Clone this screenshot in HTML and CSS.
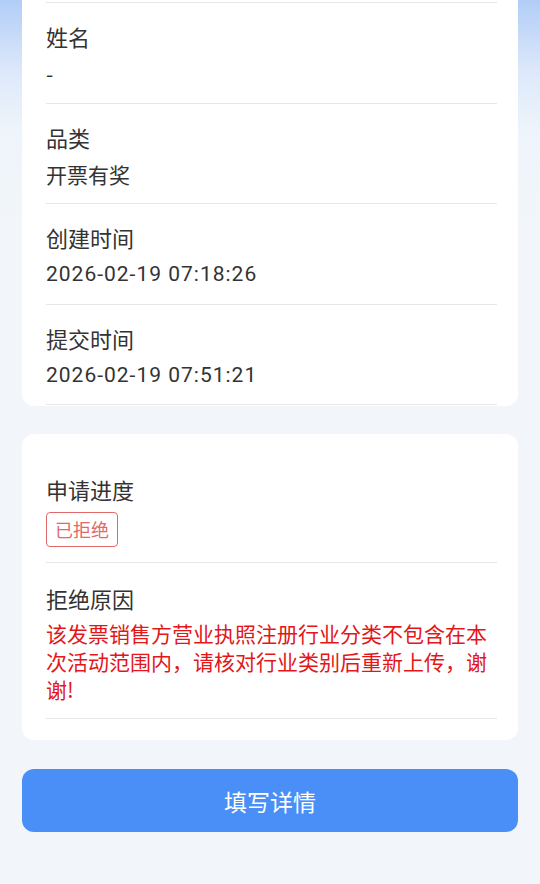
FILE: index.html
```html
<!DOCTYPE html>
<html lang="zh-CN">
<head>
  <meta charset="UTF-8">
  <meta name="viewport" content="width=device-width, initial-scale=1.0">
  <title>申请详情</title>
  <link rel="stylesheet" href="styles.css">
</head>
<body>
  <div class="page">
    <!-- 基本信息 -->
    <div class="card card-info">
      <div class="row">
        <div class="label">姓名</div>
        <div class="value">-</div>
      </div>
      <div class="row">
        <div class="label">品类</div>
        <div class="value">开票有奖</div>
      </div>
      <div class="row">
        <div class="label">创建时间</div>
        <div class="value num">2026-02-19 07:18:26</div>
      </div>
      <div class="row">
        <div class="label">提交时间</div>
        <div class="value num">2026-02-19 07:51:21</div>
      </div>
    </div>

    <!-- 审核状态 -->
    <div class="card card-status">
      <div class="row">
        <div class="label">申请进度</div>
        <span class="tag tag-reject">已拒绝</span>
      </div>
      <div class="row">
        <div class="label">拒绝原因</div>
        <div class="reason">该发票销售方营业执照注册行业分类不包含在本次活动范围内，请核对行业类别后重新上传，谢谢!</div>
      </div>
    </div>

    <button class="btn-primary">填写详情</button>
  </div>
</body>
</html>
```

FILE: styles.css
```css
body {
  margin: 0;
  padding: 0;
  font-family: "Noto Sans CJK SC", sans-serif;
  color: #333;
  background: linear-gradient(180deg, #b1cdf7 0, #dce8fa 70px, #eef4fb 130px, #f2f6fa 220px) no-repeat, #f3f6fa;
  min-height: 884px;
}
.page {
  padding: 0 22px;
}
.card {
  background: #fff;
  border-radius: 12px;
  padding: 0 21px 0 24px;
}
/* 页面已向下滚动，卡片顶部在视窗外 */
.card-info {
  border-radius: 0 0 12px 12px;
  padding-top: 2px;
  padding-bottom: 1px;
}
.card-info .row:first-child {
  border-top: 1px solid #e6e6e6;
}
.card-status {
  margin-top: 28px;
  padding-top: 20px;
  padding-bottom: 21px;
}
.row {
  border-bottom: 1px solid #e6e6e6;
  padding: 18px 0 14.5px;
}
.card-status .row {
  padding: 20px 0 15px;
}
.label {
  font-size: 22px;
  line-height: 30px;
  color: #333;
}
.value {
  font-size: 21px;
  line-height: 30px;
  margin-top: 7px;
  color: #333;
}
.value.num {
  font-family: Roboto, "Noto Sans CJK SC", sans-serif;
  letter-spacing: 1px;
}
.tag {
  display: inline-block;
  margin-top: 8px;
  padding: 0 8px;
  height: 33px;
  line-height: 33px;
  font-size: 18px;
  border-radius: 4px;
}
.tag-reject {
  color: #e06a6a;
  border: 1px solid #e06a6a;
}
.reason {
  margin-top: 6px;
  font-size: 21px;
  line-height: 28px;
  color: #e3161a;
}
.btn-primary {
  display: block;
  width: 100%;
  height: 63px;
  margin-top: 29px;
  border: none;
  border-radius: 12px;
  background: #4a8ff7;
  color: #fff;
  font-family: "Noto Sans CJK SC", sans-serif;
  font-size: 23px;
  cursor: pointer;
}
```
